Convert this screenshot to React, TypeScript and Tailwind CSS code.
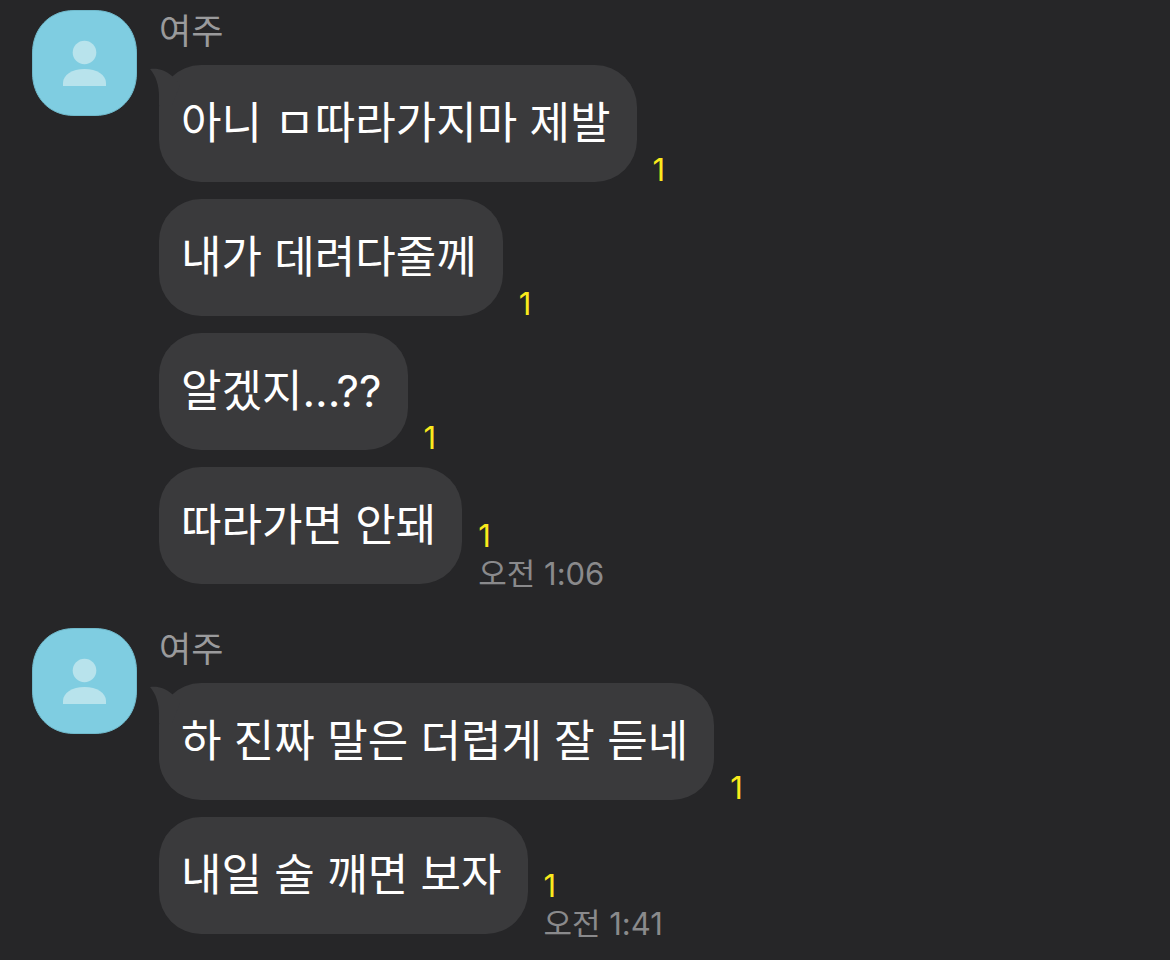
interface Message {
  text: string;
  unread: number;
  time?: string;
}

interface MessageGroup {
  id: number;
  sender: string;
  messages: Message[];
}

const groups: MessageGroup[] = [
  {
    id: 1,
    sender: '여주',
    messages: [
      { text: '아니 ㅁ따라가지마 제발', unread: 1 },
      { text: '내가 데려다줄께', unread: 1 },
      { text: '알겠지...??', unread: 1 },
      { text: '따라가면 안돼', unread: 1, time: '오전 1:06' },
    ],
  },
  {
    id: 2,
    sender: '여주',
    messages: [
      { text: '하 진짜 말은 더럽게 잘 듣네', unread: 1 },
      { text: '내일 술 깨면 보자', unread: 1, time: '오전 1:41' },
    ],
  },
];

// Default profile picture
function Avatar() {
  return (
    <svg className="h-[106px] w-[105px] shrink-0" viewBox="0 0 105 106" aria-hidden="true">
      <path
        d="M42 .5H63C88 .5 104.500 19 104.500 43V63C104.500 87 88 105.500 63 105.500H42C17 105.500 .5 87 .5 63V43C.5 19 17 .5 42 .5Z"
        fill="#7fcde1"
        stroke="#70b9cb"
      />
      <circle cx="52.500" cy="42.500" r="11.800" fill="#b8e3ec" />
      <path d="M31 76v-3c0-8 9-14 21.500-14s21.500 6 21.500 14v3Z" fill="#b8e3ec" />
    </svg>
  );
}

// Tail on the first bubble of a group
function Tail() {
  return (
    <svg className="absolute top-0 -left-[9px] h-10 w-10" viewBox="0 0 40 40" aria-hidden="true">
      <path d="M0 4C8 3 15 5 22 11L30 20L22 40H9V32C9 20 6 11 0 4Z" fill="#3a3a3c" />
    </svg>
  );
}

function MessageRow({ message, first }: { message: Message; first: boolean }) {
  return (
    <li className="flex items-end gap-4">
      <div className="relative rounded-[42px] bg-[#3a3a3c] py-[30px] pr-[26px] pl-[22px]">
        {first && <Tail />}
        <p className="relative text-[44px] leading-[57px] text-white">{message.text}</p>
      </div>
      <div className="-mb-2 flex flex-col text-[31px]">
        <span className="leading-10 text-[#faea1c]">{message.unread}</span>
        {message.time && <time className="leading-9 text-[#8a8a8c]">{message.time}</time>}
      </div>
    </li>
  );
}

export default function App() {
  return (
    <main className="flex min-h-screen flex-col gap-11 bg-[#262628] px-8 py-[10px] font-['Inter','Noto_Sans_CJK_KR',sans-serif]">
      {groups.map((group) => (
        <section key={group.id} className="flex items-start gap-[22px]">
          <Avatar />
          <div>
            <h2 className="mb-3 text-[35px] leading-[43px] text-[#9a9a9c]">{group.sender}</h2>
            <ul className="flex flex-col gap-[17px]">
              {group.messages.map((message, index) => (
                <MessageRow key={message.text} message={message} first={index === 0} />
              ))}
            </ul>
          </div>
        </section>
      ))}
    </main>
  );
}
